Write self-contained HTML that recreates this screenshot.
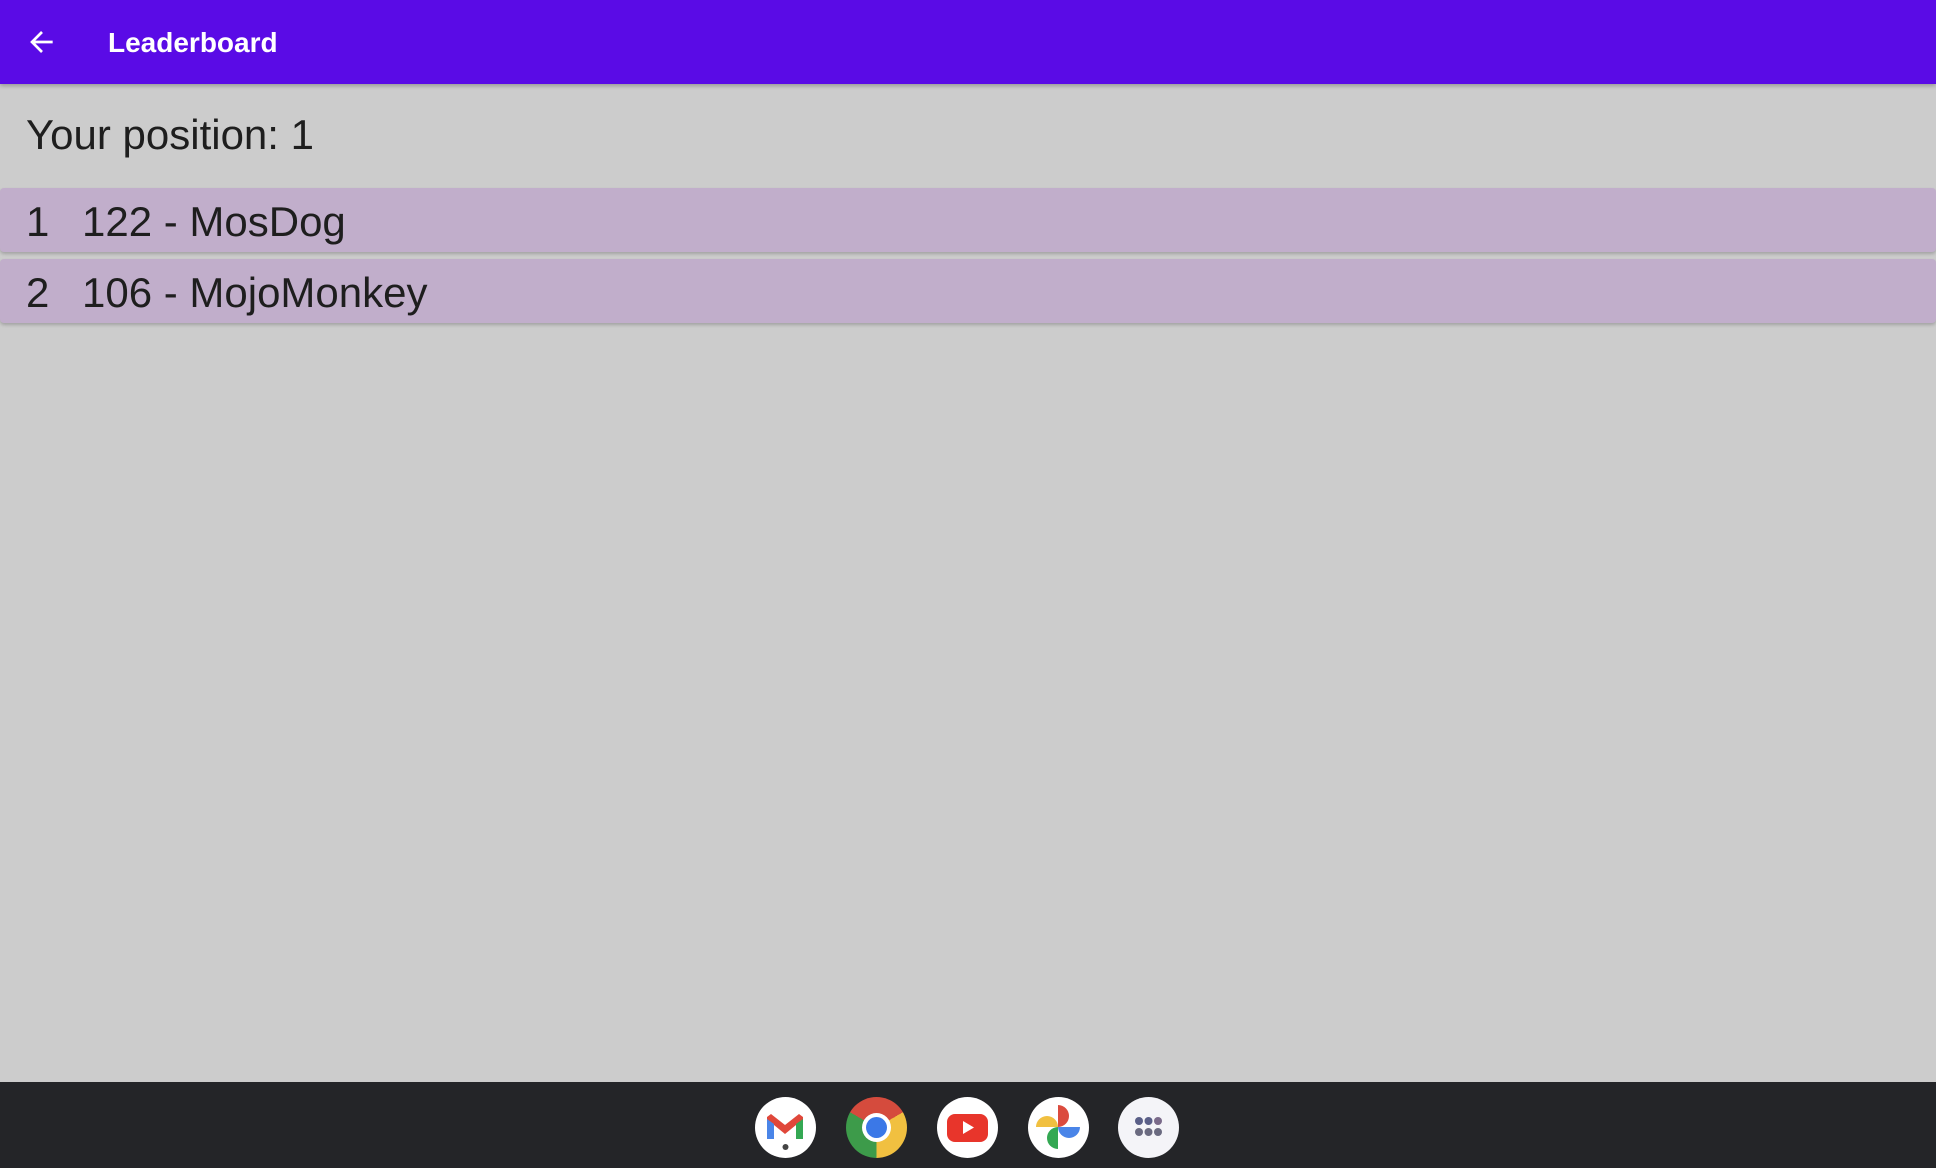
<!DOCTYPE html>
<html><head><style>
body{margin:0;width:1936px;height:1168px;background:#cccccc;font-family:"Liberation Sans",sans-serif;position:relative;overflow:hidden}
.hdr{position:absolute;left:0;top:0;width:1936px;height:84px;background:#5a0be6;box-shadow:0 2px 4px rgba(0,0,0,.25)}
.title{position:absolute;left:108px;top:27px;font-size:28px;font-weight:bold;color:#fff}
.pos{position:absolute;left:26px;top:111px;font-size:42px;color:#1e1e1e}
.row{position:absolute;left:0;width:1936px;height:64px;background:#c1aecb;box-shadow:0 2px 3px rgba(0,0,0,.2);border-radius:4px;font-size:42px;color:#1e1e1e}
.row span{position:absolute;top:10px}
.dock{position:absolute;left:0;top:1082px;width:1936px;height:86px;background:#242528}
.ic{position:absolute;top:1097px;width:61px;height:61px;border-radius:50%;background:#fff}
</style></head><body>
<div class="hdr">
<svg style="position:absolute;left:26px;top:26px" width="32" height="32" viewBox="0 0 24 24"><path d="M20 12H5M12 4.5L4.5 12 12 19.5" stroke="#fff" stroke-width="2" fill="none"/></svg>
<div class="title">Leaderboard</div>
</div>
<div class="pos">Your position: 1</div>
<div class="row" style="top:188px"><span style="left:26px">1</span><span style="left:82px">122 - MosDog</span></div>
<div class="row" style="top:259px"><span style="left:26px">2</span><span style="left:82px">106 - MojoMonkey</span></div>
<div class="dock"></div>
<div class="ic" style="left:755px"><svg width="61" height="61" viewBox="0 0 61 61"><path d="M12 20v22h7V28l11 9 11-9v14h7V20l-4-3-14 11-14-11z" fill="#e0473a"/><path d="M12 22v20h7V27z" fill="#4a85e8"/><path d="M48 22v20h-7V27z" fill="#34a853"/><circle cx="30.5" cy="50" r="3" fill="#444"/></svg></div>
<div class="ic" style="left:846px;background:conic-gradient(from -60deg,#d54b3d 0 120deg,#f1c040 120deg 240deg,#3d9b4a 240deg 360deg)"><div style="position:absolute;left:16px;top:16px;width:29px;height:29px;border-radius:50%;background:#fff"></div><div style="position:absolute;left:20px;top:20px;width:21px;height:21px;border-radius:50%;background:#3b78e7"></div></div>
<div class="ic" style="left:937px"><div style="position:absolute;left:10px;top:17px;width:41px;height:28px;border-radius:8px;background:#e8352b"></div><svg style="position:absolute;left:0;top:0" width="61" height="61"><path d="M26 24v13l11-6.5z" fill="#fff"/></svg></div>
<div class="ic" style="left:1028px"><svg width="61" height="61" viewBox="0 0 61 61"><path d="M30 30V8a11 11 0 0 1 0 22z" fill="#db4b3e"/><path d="M30 30h22a11 11 0 0 1-22 0z" fill="#4a85e8"/><path d="M30 30v22a11 11 0 0 1 0-22z" fill="#34a853"/><path d="M30 30H8a11 11 0 0 1 22 0z" fill="#f1c040"/></svg></div>
<div class="ic" style="left:1118px;background:#f4f4f8"><svg width="61" height="61"><g fill="#5a5f88"><circle cx="21" cy="24" r="4"/><circle cx="30.5" cy="24" r="4"/><circle cx="40" cy="24" r="4" fill="#7a6a8a"/><circle cx="21" cy="35" r="4" fill="#6a6a80"/><circle cx="30.5" cy="35" r="4" fill="#6a6a80"/><circle cx="40" cy="35" r="4" fill="#6a6a80"/></g></svg></div>
</body></html>
